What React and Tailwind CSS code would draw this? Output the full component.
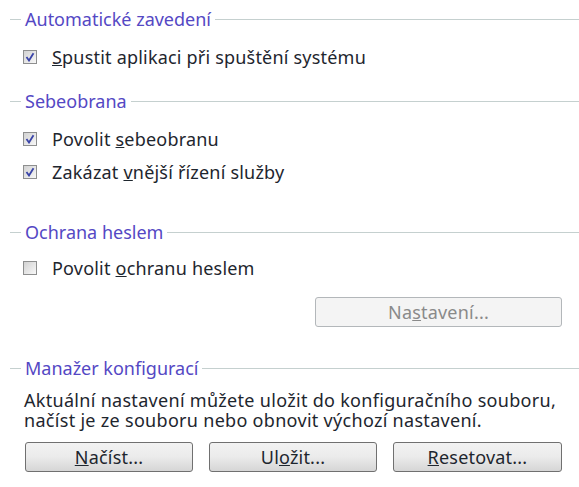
import React from 'react'

function Header({ title }) {
  return (
    <div className="flex items-center h-[20px]">
      <div className="w-[11px] h-px bg-[#c5d0cf] ml-[10px]" />
      <span className="px-[4px] text-[#5448c4] leading-none">{title}</span>
      <div className="flex-1 h-px bg-[#c5d0cf]" />
    </div>
  )
}

function Check({ checked, children }) {
  return (
    <label className="flex items-center h-[20px] pl-[23px]">
      <span className="w-[14px] h-[14px] border border-[#8e8f8f] bg-gradient-to-br from-[#d2d2d2] to-[#f8f8f8] flex items-center justify-center shrink-0">
        {checked && (
          <svg width="10" height="10" viewBox="0 0 10 10">
            <path d="M1.5 5 L4 8.5 L8.5 1.2" fill="none" stroke="#3a44a8" strokeWidth="1.8" />
          </svg>
        )}
      </span>
      <span className="ml-[15px] text-[#1e262e] leading-none tracking-[0.2px]">{children}</span>
    </label>
  )
}

function Btn({ children, disabled, className = '' }) {
  return (
    <button
      className={
        'h-[30px] rounded-[3px] border text-center leading-none tracking-[0.2px] ' +
        (disabled
          ? 'border-[#b3b7ba] bg-[#f4f4f4] text-[#8a8a8a] '
          : 'border-[#707070] bg-gradient-to-b from-[#f2f2f2] via-[#ebebeb] to-[#d6d6d6] text-[#1e262e] ') +
        className
      }
    >
      {children}
    </button>
  )
}

export default function App() {
  return (
    <div
      className="w-[579px] h-[487px] bg-white text-[18px] overflow-hidden"
      style={{ fontFamily: '"Noto Sans", "Open Sans", sans-serif' }}
    >
      <div className="pt-[9px]">
        <Header title="Automatické zavedení" />
        <div className="mt-[18px]">
          <Check checked><u>S</u>pustit aplikaci při spuštění systému</Check>
        </div>

        <div className="mt-[24px]">
          <Header title="Sebeobrana" />
        </div>
        <div className="mt-[18px] flex flex-col gap-[13px]">
          <Check checked>Povolit <u>s</u>ebeobranu</Check>
          <Check checked>Zakázat <u>v</u>nější řízení služby</Check>
        </div>

        <div className="mt-[40px]">
          <Header title="Ochrana heslem" />
        </div>
        <div className="mt-[16px]">
          <Check>Povolit <u>o</u>chranu heslem</Check>
        </div>
        <div className="flex justify-end pr-[17px] mt-[19px]">
          <Btn disabled className="w-[247px]">Na<u>s</u>tavení...</Btn>
        </div>

        <div className="mt-[31px]">
          <Header title="Manažer konfigurací" />
        </div>
        <p className="mt-[12px] pl-[24px] text-[#1e262e] leading-[20px] tracking-[0.3px]">
          Aktuální nastavení můžete uložit do konfiguračního souboru,<br />
          načíst je ze souboru nebo obnovit výchozí nastavení.
        </p>
        <div className="flex gap-[16px] pl-[25px] mt-[12px]">
          <Btn className="w-[168px]"><u>N</u>ačíst...</Btn>
          <Btn className="w-[168px]">Ul<u>o</u>žit...</Btn>
          <Btn className="w-[169px]"><u>R</u>esetovat...</Btn>
        </div>
      </div>
    </div>
  )
}
